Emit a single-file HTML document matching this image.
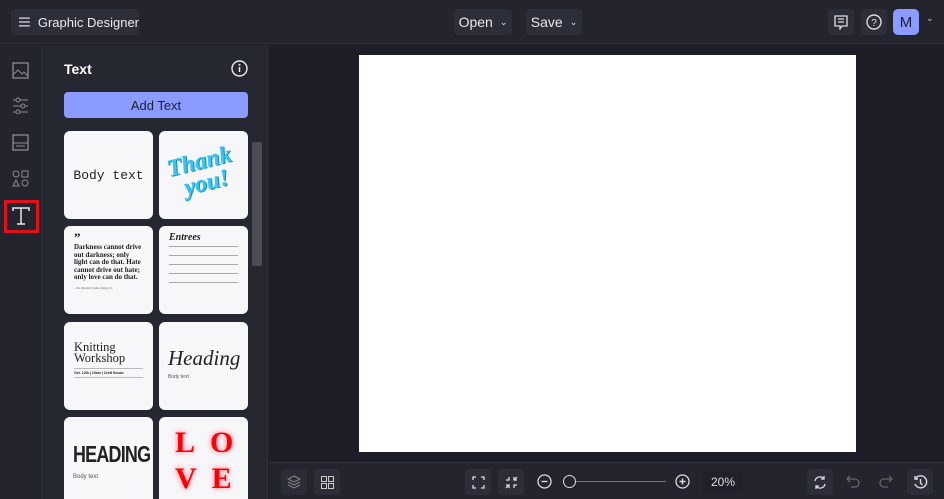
<!DOCTYPE html>
<html style="width:944px;height:499px;overflow:hidden"><head><style>
*{margin:0;padding:0;box-sizing:border-box}
body{width:944px;height:499px;overflow:hidden;background:#1d1e27;font-family:"Liberation Sans",sans-serif;color:#e6e7ee;position:relative}
.a{position:absolute}
.btn{position:absolute;background:#2c2e39;border-radius:4px;color:#e8e9f0;font-size:14px;display:flex;align-items:center;justify-content:center;white-space:nowrap}
.card{position:absolute;width:89px;height:88px;background:#f7f7fa;border-radius:6px;overflow:hidden;color:#222}
svg{display:block}
</style></head><body>
<div class="a" style="left:0;top:0;width:944px;height:44px;background:#23242e;border-bottom:1px solid #30323c"></div>
<div class="btn" style="left:11px;top:9px;width:128px;height:26px;justify-content:flex-start;padding-left:8px">
<svg width="14" height="12" viewBox="0 0 14 12"><path d="M0 1h14M0 6h14M0 11h14" stroke="#ddd" stroke-width="1.5"/></svg><span style="margin-left:8px;font-size:13px">Graphic Designer</span></div>
<div class="btn" style="left:454px;top:9px;width:58px;height:26px">Open <span style="font-size:9px;margin-left:7px">&#8964;</span></div>
<div class="btn" style="left:526px;top:9px;width:56px;height:26px">Save <span style="font-size:9px;margin-left:7px">&#8964;</span></div>
<div class="btn" style="left:828px;top:9px;width:26px;height:26px"><svg width="14" height="15" viewBox="0 0 14 15"><path d="M1 1h12v10H8l-2 3v-3H1z M4 4h6M4 7h6" stroke="#ddd" fill="none" stroke-width="1.3"/></svg></div>
<div class="btn" style="left:861px;top:9px;width:26px;height:26px"><svg width="16" height="16" viewBox="0 0 16 16"><circle cx="8" cy="8" r="7" stroke="#ddd" fill="none" stroke-width="1.4"/><text x="8" y="12" font-size="10" fill="#ddd" text-anchor="middle" font-family="Liberation Sans">?</text></svg></div>
<div class="a" style="left:893px;top:9px;width:26px;height:26px;background:#8c9bff;border-radius:5px;color:#1d2030;font-size:15px;display:flex;align-items:center;justify-content:center">M</div>
<div class="a" style="left:926px;top:13px;font-size:9px;color:#ccc">&#8964;</div>

<div class="a" style="left:0;top:45px;width:43px;height:454px;background:#23242e;border-right:1px solid #30323c"></div>
<svg class="a" style="left:12px;top:62px" width="17" height="17" viewBox="0 0 17 17"><rect x="1" y="1" width="15" height="15" stroke="#888a96" fill="none" stroke-width="1.3"/><path d="M1 13l5-5 4 4 2-2 4 4" stroke="#888a96" fill="none"/></svg>
<svg class="a" style="left:12px;top:97px" width="17" height="17" viewBox="0 0 17 17"><path d="M1 3h15M1 9h15M1 15h15" stroke="#888a96"/><circle cx="6" cy="3" r="2" fill="#23242e" stroke="#888a96"/><circle cx="11" cy="9" r="2" fill="#23242e" stroke="#888a96"/><circle cx="6" cy="15" r="2" fill="#23242e" stroke="#888a96"/></svg>
<svg class="a" style="left:12px;top:134px" width="17" height="17" viewBox="0 0 17 17"><rect x="1" y="1" width="15" height="15" stroke="#888a96" fill="none" stroke-width="1.3"/><path d="M1 9h15M4 12h9" stroke="#888a96"/></svg>
<svg class="a" style="left:12px;top:170px" width="17" height="17" viewBox="0 0 17 17"><circle cx="4" cy="4" r="3" stroke="#888a96" fill="none"/><rect x="10" y="1" width="6" height="6" stroke="#888a96" fill="none"/><path d="M4 10l3 6H1z" stroke="#888a96" fill="none"/><circle cx="13" cy="13" r="3" stroke="#888a96" fill="none"/></svg>
<div class="a" style="left:4px;top:200px;width:35px;height:33px;border:3px solid #e0101c"></div>
<svg class="a" style="left:11px;top:206px" width="20" height="20" viewBox="0 0 20 20"><path d="M2 5V2h16v3M10 2v16M6 18h8" stroke="#e8e8ee" fill="none" stroke-width="1.5"/></svg>

<div class="a" style="left:44px;top:45px;width:224px;height:454px;background:#252731;border-right:1px solid #30323c;overflow:hidden">
<div class="a" style="left:20px;top:16px;font-size:14px;font-weight:bold;color:#fff">Text</div>
<svg class="a" style="left:187px;top:15px" width="17" height="17" viewBox="0 0 17 17"><circle cx="8.5" cy="8.5" r="7.5" stroke="#eee" fill="none" stroke-width="1.4"/><path d="M8.5 7v5" stroke="#eee" stroke-width="1.5"/><circle cx="8.5" cy="4.8" r="1" fill="#eee"/></svg>
<div class="a" style="left:20px;top:47px;width:184px;height:26px;background:#8c9bff;border-radius:4px;color:#1d2030;font-size:13px;display:flex;align-items:center;justify-content:center">Add Text</div>
<div class="a" style="left:208px;top:97px;width:10px;height:124px;background:#4a4c58;border-radius:2px"></div>

<div class="card" style="left:20px;top:86px;display:flex;align-items:center;justify-content:center;font-family:'Liberation Mono',monospace;font-size:13px">Body text</div>
<div class="card" style="left:115px;top:86px"><div style="transform:rotate(-14deg);margin:18px 0 0 10px;color:#3bc4ee;font:italic bold 24px/22px 'Liberation Serif',serif;text-shadow:1px 1px 0 #1e8fc0">Thank<br>&nbsp;&nbsp;you!</div></div>
<div class="card" style="left:20px;top:181px;padding:8px 10px;font-family:'Liberation Serif',serif"><div style="font-size:13px;font-weight:bold;line-height:8px">&#8221;</div><div style="font-size:7px;font-weight:bold;line-height:7.5px;margin-top:2px">Darkness cannot drive out darkness; only light can do that. Hate cannot drive out hate; only love can do that.</div><div style="font-size:3.5px;margin-top:4px;color:#666">- Dr. Martin Luther King Jr.</div></div>
<div class="card" style="left:115px;top:181px;padding:6px 10px"><div style="font:italic bold 10px 'Liberation Serif',serif">Entrees</div>
<div style="border-top:1px solid #aaa;margin-top:3px;height:9px"></div><div style="border-top:1px solid #aaa;height:9px"></div><div style="border-top:1px solid #aaa;height:9px"></div><div style="border-top:1px solid #aaa;height:9px"></div><div style="border-top:1px solid #aaa"></div></div>
<div class="card" style="left:20px;top:277px;padding:20px 10px;font-family:'Liberation Serif',serif"><div style="font-size:12.5px;line-height:11px">Knitting<br>Workshop</div><div style="border-top:1px solid #bbb;margin-top:4px;font:bold 3.5px 'Liberation Sans';padding-top:2px">Oct. 12th | 10am | Craft House</div><div style="border-top:1px solid #bbb;margin-top:2px;height:5px"></div></div>
<div class="card" style="left:115px;top:277px;padding:24px 9px"><div style="font:italic 21px 'Liberation Serif',serif">Heading</div><div style="font-size:5px;color:#555;margin-top:3px">Body text</div></div>
<div class="card" style="left:20px;top:372px;padding:24px 9px;height:90px"><div style="font:bold 23px 'Liberation Sans',sans-serif;letter-spacing:-1px;transform:scaleX(.78);transform-origin:left;white-space:nowrap">HEADING</div><div style="font-size:6px;color:#555;margin-top:6px">Body text</div></div>
<div class="card" style="left:115px;top:372px;height:90px;color:#f00;font:bold 30px/36px 'Liberation Serif',serif;padding:8px 0 0 16px;text-shadow:0 0 6px #ff6080;white-space:nowrap">L&nbsp;&nbsp;O<br>V&nbsp;&nbsp;E</div>
</div>

<div class="a" style="left:359px;top:55px;width:497px;height:397px;background:#fff"></div>

<div class="a" style="left:269px;top:462px;width:675px;height:37px;background:#23242e;border-top:1px solid #30323c"></div>
<div class="btn" style="left:281px;top:469px;width:26px;height:26px;background:#2a2c36"><svg width="14" height="14" viewBox="0 0 14 14"><path d="M7 1l6 3-6 3-6-3z M1 7l6 3 6-3 M1 10l6 3 6-3" stroke="#888" fill="none"/></svg></div>
<div class="btn" style="left:314px;top:469px;width:26px;height:26px"><svg width="13" height="13" viewBox="0 0 13 13"><rect x=".5" y=".5" width="5" height="5" stroke="#ccc" fill="none"/><rect x="7.5" y=".5" width="5" height="5" stroke="#ccc" fill="none"/><rect x=".5" y="7.5" width="5" height="5" stroke="#ccc" fill="none"/><rect x="7.5" y="7.5" width="5" height="5" stroke="#ccc" fill="none"/></svg></div>
<div class="btn" style="left:465px;top:469px;width:26px;height:26px"><svg width="13" height="13" viewBox="0 0 13 13"><path d="M1 4V1h3M9 1h3v3M12 9v3H9M4 12H1V9" stroke="#ddd" fill="none" stroke-width="1.3"/></svg></div>
<div class="btn" style="left:498px;top:469px;width:26px;height:26px"><svg width="13" height="13" viewBox="0 0 13 13"><path d="M1 4h3V1M9 1v3h3M12 9H9v3M4 12V9H1M9 4l3-3M4 9l-3 3" stroke="#ddd" fill="none" stroke-width="1.3"/></svg></div>
<svg class="a" style="left:537px;top:474px" width="15" height="15" viewBox="0 0 15 15"><circle cx="7.5" cy="7.5" r="6.5" stroke="#ddd" fill="none" stroke-width="1.3"/><path d="M4.5 7.5h6" stroke="#ddd" stroke-width="1.4"/></svg>
<div class="a" style="left:567px;top:481px;width:99px;height:1px;background:#777"></div>
<div class="a" style="left:563px;top:475px;width:13px;height:13px;border-radius:50%;border:1.5px solid #ddd;background:#23242e"></div>
<svg class="a" style="left:675px;top:474px" width="15" height="15" viewBox="0 0 15 15"><circle cx="7.5" cy="7.5" r="6.5" stroke="#ddd" fill="none" stroke-width="1.3"/><path d="M4.5 7.5h6M7.5 4.5v6" stroke="#ddd" stroke-width="1.4"/></svg>
<div class="a" style="left:703px;top:471px;width:40px;height:22px;background:#1f2029;font-size:12px;color:#ddd;display:flex;align-items:center;justify-content:center">20%</div>
<div class="btn" style="left:807px;top:469px;width:26px;height:26px"><svg width="14" height="15" viewBox="0 0 14 15"><path d="M2 6a5 5 0 0 1 9-2M12 9a5 5 0 0 1-9 2M11 1v3H8M3 14v-3h3" stroke="#ddd" fill="none" stroke-width="1.3"/></svg></div>
<svg class="a" style="left:846px;top:475px" width="14" height="13" viewBox="0 0 14 13"><path d="M4 1L1 4l3 3M1 4h8a4 4 0 0 1 0 8H5" stroke="#666" fill="none" stroke-width="1.3"/></svg>
<svg class="a" style="left:879px;top:475px" width="14" height="13" viewBox="0 0 14 13"><path d="M10 1l3 3-3 3M13 4H5a4 4 0 0 0 0 8h4" stroke="#666" fill="none" stroke-width="1.3"/></svg>
<div class="btn" style="left:907px;top:469px;width:26px;height:26px"><svg width="15" height="15" viewBox="0 0 15 15"><path d="M3 3a6 6 0 1 1-1 6M2 1v3h3M7.5 4v4l2 2" stroke="#ddd" fill="none" stroke-width="1.4"/></svg></div>
</body></html>
